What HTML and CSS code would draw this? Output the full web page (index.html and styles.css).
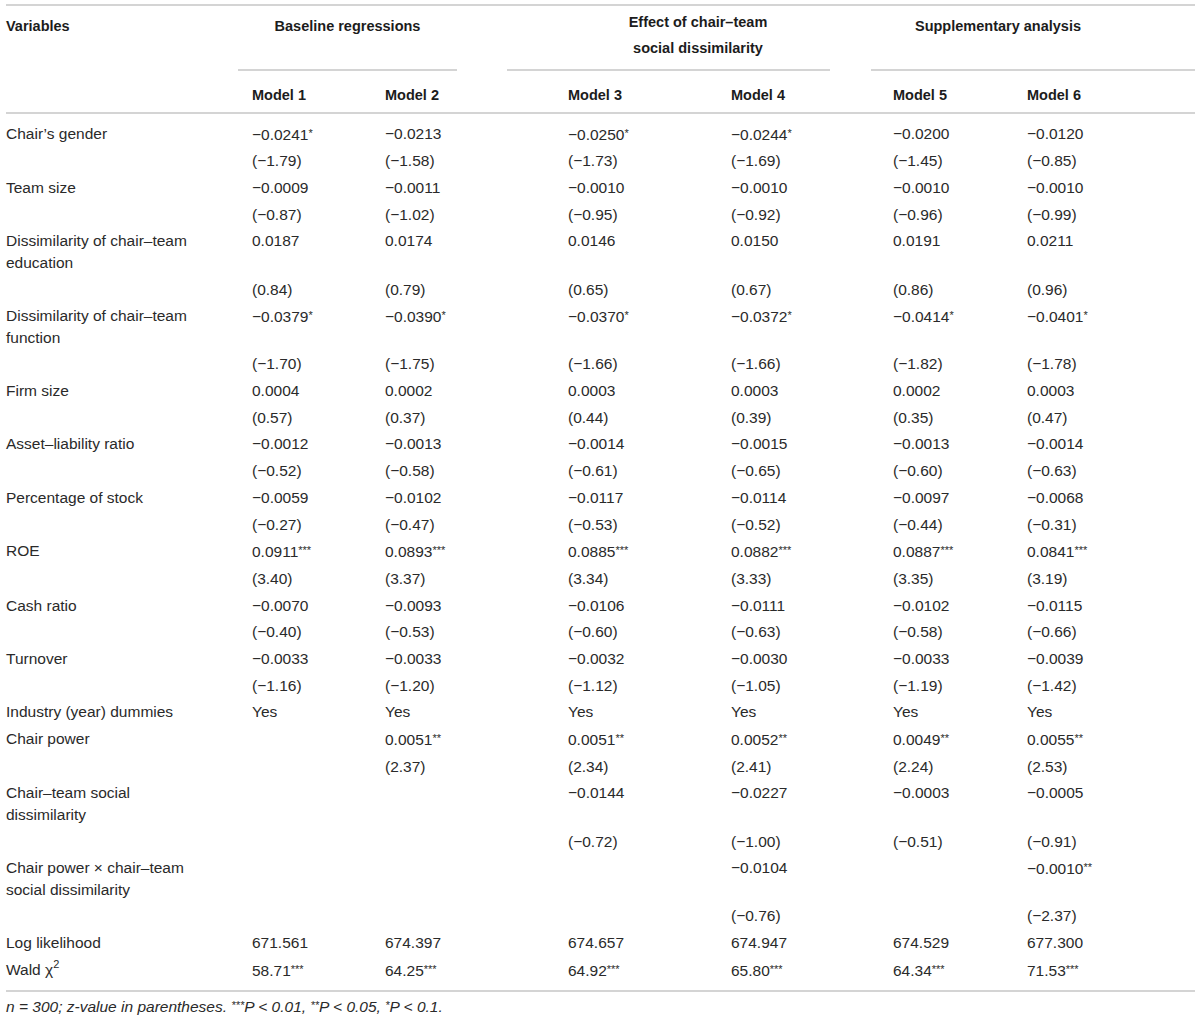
FILE: index.html
```html
<html>

<head>
    <meta charset="utf-8">
    <title>Chair–team social dissimilarity</title>
    <link rel="stylesheet" href="styles.css">
</head>

<body>
    <div class="table">
        <!-- group headings -->
        <div class="groups head">
            <div class="variables">Variables</div>
            <div class="group baseline">Baseline regressions</div>
            <div class="group effect">Effect of chair–team<br>social dissimilarity</div>
            <div class="group supp">Supplementary analysis</div>
        </div>
        <div class="row models head">
            <div></div>
            <div>Model 1</div>
            <div>Model 2</div>
            <div>Model 3</div>
            <div>Model 4</div>
            <div>Model 5</div>
            <div>Model 6</div>
        </div>

        <div class="body">
            <div class="row"><div class="label">Chair’s gender</div><div>−0.0241<span class="sig">*</span></div><div>−0.0213</div><div>−0.0250<span class="sig">*</span></div><div>−0.0244<span class="sig">*</span></div><div>−0.0200</div><div>−0.0120</div></div>
            <div class="row"><div class="label"></div><div>(−1.79)</div><div>(−1.58)</div><div>(−1.73)</div><div>(−1.69)</div><div>(−1.45)</div><div>(−0.85)</div></div>
            <div class="row"><div class="label">Team size</div><div>−0.0009</div><div>−0.0011</div><div>−0.0010</div><div>−0.0010</div><div>−0.0010</div><div>−0.0010</div></div>
            <div class="row"><div class="label"></div><div>(−0.87)</div><div>(−1.02)</div><div>(−0.95)</div><div>(−0.92)</div><div>(−0.96)</div><div>(−0.99)</div></div>
            <div class="row"><div class="label">Dissimilarity of chair–team education</div><div>0.0187</div><div>0.0174</div><div>0.0146</div><div>0.0150</div><div>0.0191</div><div>0.0211</div></div>
            <div class="row"><div class="label"></div><div>(0.84)</div><div>(0.79)</div><div>(0.65)</div><div>(0.67)</div><div>(0.86)</div><div>(0.96)</div></div>
            <div class="row"><div class="label">Dissimilarity of chair–team function</div><div>−0.0379<span class="sig">*</span></div><div>−0.0390<span class="sig">*</span></div><div>−0.0370<span class="sig">*</span></div><div>−0.0372<span class="sig">*</span></div><div>−0.0414<span class="sig">*</span></div><div>−0.0401<span class="sig">*</span></div></div>
            <div class="row"><div class="label"></div><div>(−1.70)</div><div>(−1.75)</div><div>(−1.66)</div><div>(−1.66)</div><div>(−1.82)</div><div>(−1.78)</div></div>
            <div class="row"><div class="label">Firm size</div><div>0.0004</div><div>0.0002</div><div>0.0003</div><div>0.0003</div><div>0.0002</div><div>0.0003</div></div>
            <div class="row"><div class="label"></div><div>(0.57)</div><div>(0.37)</div><div>(0.44)</div><div>(0.39)</div><div>(0.35)</div><div>(0.47)</div></div>
            <div class="row"><div class="label">Asset–liability ratio</div><div>−0.0012</div><div>−0.0013</div><div>−0.0014</div><div>−0.0015</div><div>−0.0013</div><div>−0.0014</div></div>
            <div class="row"><div class="label"></div><div>(−0.52)</div><div>(−0.58)</div><div>(−0.61)</div><div>(−0.65)</div><div>(−0.60)</div><div>(−0.63)</div></div>
            <div class="row"><div class="label">Percentage of stock</div><div>−0.0059</div><div>−0.0102</div><div>−0.0117</div><div>−0.0114</div><div>−0.0097</div><div>−0.0068</div></div>
            <div class="row"><div class="label"></div><div>(−0.27)</div><div>(−0.47)</div><div>(−0.53)</div><div>(−0.52)</div><div>(−0.44)</div><div>(−0.31)</div></div>
            <div class="row"><div class="label">ROE</div><div>0.0911<span class="sig">***</span></div><div>0.0893<span class="sig">***</span></div><div>0.0885<span class="sig">***</span></div><div>0.0882<span class="sig">***</span></div><div>0.0887<span class="sig">***</span></div><div>0.0841<span class="sig">***</span></div></div>
            <div class="row"><div class="label"></div><div>(3.40)</div><div>(3.37)</div><div>(3.34)</div><div>(3.33)</div><div>(3.35)</div><div>(3.19)</div></div>
            <div class="row"><div class="label">Cash ratio</div><div>−0.0070</div><div>−0.0093</div><div>−0.0106</div><div>−0.0111</div><div>−0.0102</div><div>−0.0115</div></div>
            <div class="row"><div class="label"></div><div>(−0.40)</div><div>(−0.53)</div><div>(−0.60)</div><div>(−0.63)</div><div>(−0.58)</div><div>(−0.66)</div></div>
            <div class="row"><div class="label">Turnover</div><div>−0.0033</div><div>−0.0033</div><div>−0.0032</div><div>−0.0030</div><div>−0.0033</div><div>−0.0039</div></div>
            <div class="row"><div class="label"></div><div>(−1.16)</div><div>(−1.20)</div><div>(−1.12)</div><div>(−1.05)</div><div>(−1.19)</div><div>(−1.42)</div></div>
            <div class="row"><div class="label">Industry (year) dummies</div><div>Yes</div><div>Yes</div><div>Yes</div><div>Yes</div><div>Yes</div><div>Yes</div></div>
            <div class="row"><div class="label">Chair power</div><div></div><div>0.0051<span class="sig">**</span></div><div>0.0051<span class="sig">**</span></div><div>0.0052<span class="sig">**</span></div><div>0.0049<span class="sig">**</span></div><div>0.0055<span class="sig">**</span></div></div>
            <div class="row"><div class="label"></div><div></div><div>(2.37)</div><div>(2.34)</div><div>(2.41)</div><div>(2.24)</div><div>(2.53)</div></div>
            <div class="row"><div class="label">Chair–team social dissimilarity</div><div></div><div></div><div>−0.0144</div><div>−0.0227</div><div>−0.0003</div><div>−0.0005</div></div>
            <div class="row"><div class="label"></div><div></div><div></div><div>(−0.72)</div><div>(−1.00)</div><div>(−0.51)</div><div>(−0.91)</div></div>
            <div class="row"><div class="label">Chair power × chair–team social dissimilarity</div><div></div><div></div><div></div><div>−0.0104</div><div></div><div>−0.0010<span class="sig">**</span></div></div>
            <div class="row"><div class="label"></div><div></div><div></div><div></div><div>(−0.76)</div><div></div><div>(−2.37)</div></div>
            <div class="row"><div class="label">Log likelihood</div><div>671.561</div><div>674.397</div><div>674.657</div><div>674.947</div><div>674.529</div><div>677.300</div></div>
            <div class="row"><div class="label">Wald χ<sup>2</sup></div><div>58.71<span class="sig">***</span></div><div>64.25<span class="sig">***</span></div><div>64.92<span class="sig">***</span></div><div>65.80<span class="sig">***</span></div><div>64.34<span class="sig">***</span></div><div>71.53<span class="sig">***</span></div></div>
        </div>

        <p class="note">n = 300; z-value in parentheses. <span class="sig">***</span>P &lt; 0.01, <span class="sig">**</span>P &lt; 0.05, <span class="sig">*</span>P &lt; 0.1.</p>
    </div>
</body>

</html>
```

FILE: styles.css
```css
body {
    margin: 0;
    background: #ffffff;
    color: #2a2a2a;
    font-family: "Liberation Sans", Arial, sans-serif;
    font-size: 15.5px;
}

.table {
    width: 1189px;
    margin: 4px 0 0 6px;
    border-top: 2px solid #d4d4d4;
}

.head {
    font-weight: bold;
    font-size: 14.5px;
    color: #1c1c1c;
}

.groups {
    display: grid;
    grid-template-columns: 232px 14px 133px 72px 50px 61px 163px 99px 41px 22px 134px 168px;
    line-height: 26px;
}

.groups > div {
    padding-top: 7px;
}

.variables {
    grid-column: 1 / 2;
}

.group {
    text-align: center;
    border-bottom: 2px solid #d4d4d4;
    padding-bottom: 8px;
}

.baseline {
    grid-column: 2 / 5;
}

.groups .effect {
    grid-column: 6 / 9;
    padding-top: 3px;
    padding-left: 59px;
}

.supp {
    grid-column: 10 / 13;
    padding-right: 70px;
}

.row {
    display: grid;
    grid-template-columns: 246px 133px 183px 163px 162px 134px 168px;
    line-height: 21.5px;
    padding: 2.6px 0;
}

.models {
    padding: 14px 0 6px;
    line-height: 21px;
    border-bottom: 2px solid #d4d4d4;
}

.body {
    padding: 6px 0 6px;
    border-bottom: 2px solid #d4d4d4;
}

.label {
    padding-right: 46px;
}

.sig {
    font-size: 11px;
    vertical-align: 3px;
}

sup {
    font-size: 11px;
    vertical-align: 7px;
    line-height: 0;
}

.note {
    margin: 0;
    padding-top: 3px;
    line-height: 21px;
    font-style: italic;
}
```
